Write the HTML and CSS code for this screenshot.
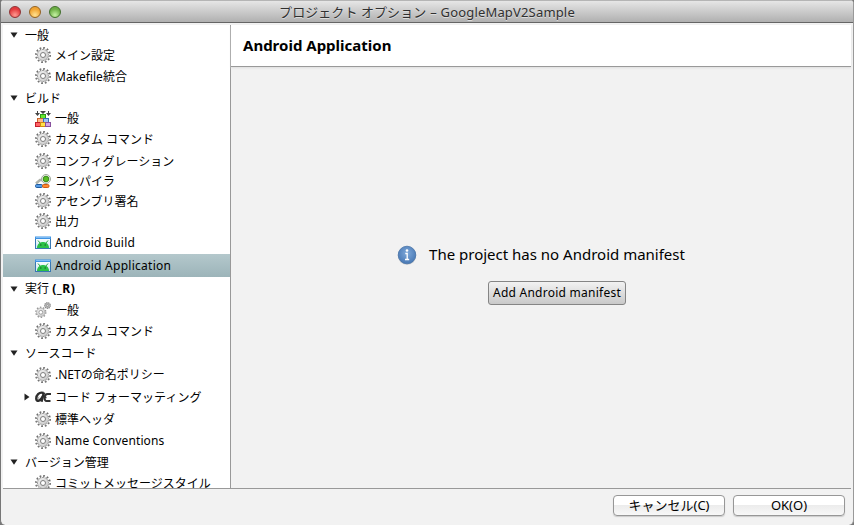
FILE: index.html
```
<!DOCTYPE html>
<html lang="ja">
<head>
<meta charset="utf-8">
<title>プロジェクト オプション – GoogleMapV2Sample</title>
<link rel="stylesheet" href="styles.css">
</head>
<body>
<svg class="defs" aria-hidden="true">
  <defs>
    <linearGradient id="metal" x1="0" y1="0" x2="1" y2="1"><stop offset="0" stop-color="#f5f5f5"/><stop offset="1" stop-color="#c4c4c4"/></linearGradient>
    <linearGradient id="sky" x1="0" y1="0" x2="0" y2="1"><stop offset="0" stop-color="#fff"/><stop offset="1" stop-color="#c9e6f4"/></linearGradient>
    <radialGradient id="info" cx=".5" cy=".4" r=".6"><stop offset="0" stop-color="#7fa9da"/><stop offset="1" stop-color="#4878b4"/></radialGradient>
  </defs>
  <symbol id="gear" viewBox="0 0 16 16">
    <circle cx="8" cy="8" r="6.800" fill="none" stroke="#6c6c6c" stroke-width="2.300" stroke-dasharray="1.700 1.860"/>
    <circle cx="8" cy="8" r="5.600" fill="url(#metal)" stroke="#8c8c8c" stroke-width=".8"/>
    <circle cx="8" cy="8" r="5.900" fill="none" stroke="#dedede" stroke-width="1.500" stroke-dasharray="1 2.089" stroke-dashoffset="-.3"/>
    <circle cx="8" cy="8" r="2.500" fill="#fff" stroke="#7d7d7d" stroke-width="1"/>
  </symbol>
  <symbol id="gears" viewBox="0 0 16 16">
    <circle cx="5.800" cy="10.300" r="4.900" fill="none" stroke="#999" stroke-width="1.600" stroke-dasharray="1.500 1.579"/>
    <circle cx="5.800" cy="10.300" r="4.200" fill="url(#metal)" stroke="#aaa" stroke-width=".8"/>
    <circle cx="5.800" cy="10.300" r="1.900" fill="#fff" stroke="#999" stroke-width=".9"/>
    <circle cx="12.500" cy="3.500" r="2.900" fill="#bbb" stroke="#888" stroke-width="1.100" stroke-dasharray="1.200 .8"/>
    <circle cx="12.500" cy="3.500" r="1.100" fill="#ddd" stroke="#888" stroke-width=".7"/>
  </symbol>
  <symbol id="blocks" viewBox="0 0 16 16">
    <path d="M2.500 0v4M13.500 0v4" stroke="#444"/>
    <path d="M0 2h5L2.500 5zM11 2h5l-2.500 3zM5 0h6L8 3z" fill="#444"/>
    <rect x="5.500" y="3.500" width="5" height="4" fill="#65e82f" stroke="#2b9818"/>
    <rect x="2.500" y="7.500" width="6" height="4" fill="#ffb98a" stroke="#c8662e"/>
    <rect x="8.500" y="7.500" width="5" height="4" fill="#9cc4f8" stroke="#3970b5"/>
    <rect x=".5" y="11.500" width="5" height="4" fill="#ff6464" stroke="#c41e2b"/>
    <rect x="5.500" y="11.500" width="5" height="4" fill="#ffe34b" stroke="#d08a12"/>
    <rect x="10.500" y="11.500" width="5" height="4" fill="#d6a5e4" stroke="#87509d"/>
  </symbol>
  <symbol id="compiler" viewBox="0 0 16 16">
    <path d="M1 10.500l4-3.500h3" fill="none" stroke="#aeb2aa" stroke-width="2.500"/>
    <circle cx="11" cy="6" r="4.500" fill="#e9eee5" stroke="#a0a89c"/>
    <circle cx="11" cy="6" r="2.800" fill="#58bd22" stroke="#368a18"/>
    <rect x=".5" y="11.500" width="7" height="3" rx="1.200" fill="#579ce5" stroke="#205b9e"/>
    <rect x="7.500" y="11.500" width="6.500" height="3" rx="1.200" fill="#ff8a31" stroke="#d05a13"/>
  </symbol>
  <symbol id="android" viewBox="0 0 16 16">
    <rect x=".5" y="2.500" width="15" height="11" fill="url(#sky)" stroke="#3878b3"/>
    <path d="M0 1.500h16V4H0z" fill="#3f93e3"/>
    <path d="M1 2.500h14" stroke="#7fbcf4"/>
    <path d="M2 13c0-8 12-8 12 0z" fill="#2bc148"/>
    <path d="M3 5.500l2.500 3M13 5.500l-2.500 3" stroke="#25a83e"/>
    <path d="M5 10h1.500M9.500 10H11" stroke="#145c22" stroke-width="1.200"/>
  </symbol>
  <symbol id="format" viewBox="0 0 16 16">
    <path d="M8.500 4C4 2.500 1 6.500 1.300 10c.4 3.500 4.500 1.500 6.400-2.500L9 3.500 6.500 12.800" fill="none" stroke="#2e2e2e" stroke-width="2.400"/>
    <path d="M4 7.500l-1 2.500" stroke="#aaa"/>
    <path d="M16 5h-3.500c-3.500 0-4 7-.8 7h3.800" fill="none" stroke="#333" stroke-width="2"/>
    <path d="M10 8.500h1.500" stroke="#333" stroke-width="1.500"/>
  </symbol>
  <symbol id="down" viewBox="0 0 8 6"><path d="M.5.500h7L4 5.800z" fill="#222"/></symbol>
  <symbol id="right" viewBox="0 0 6 8"><path d="M.5.500v7L5.500 4z" fill="#222"/></symbol>
</svg>
<div class="window">
  <header class="titlebar">
    <div class="lights"><i class="light red"></i><i class="light amber"></i><i class="light green"></i></div>
    <h1 class="title"><span class="title-jp">プロジェクト オプション</span><span class="title-name">– GoogleMapV2Sample</span></h1>
  </header>
  <div class="content">
    <nav class="tree">
      <div class="row group h20"><svg class="arrow"><use href="#down"/></svg><span>一般</span></div>
      <div class="row h20"><svg class="icon"><use href="#gear"/></svg><span>メイン設定</span></div>
      <div class="row h22"><svg class="icon"><use href="#gear"/></svg><span>Makefile統合</span></div>
      <div class="row group h22"><svg class="arrow"><use href="#down"/></svg><span>ビルド</span></div>
      <div class="row first h19"><svg class="icon"><use href="#blocks"/></svg><span>一般</span></div>
      <div class="row h22"><svg class="icon"><use href="#gear"/></svg><span>カスタム コマンド</span></div>
      <div class="row h21"><svg class="icon"><use href="#gear"/></svg><span>コンフィグレーション</span></div>
      <div class="row h20"><svg class="icon"><use href="#compiler"/></svg><span>コンパイラ</span></div>
      <div class="row h20"><svg class="icon"><use href="#gear"/></svg><span>アセンブリ署名</span></div>
      <div class="row h20"><svg class="icon"><use href="#gear"/></svg><span>出力</span></div>
      <div class="row latin h23"><svg class="icon"><use href="#android"/></svg><span>Android Build</span></div>
      <div class="row latin selected h23"><svg class="icon"><use href="#android"/></svg><span>Android Application</span></div>
      <div class="row group run h23"><svg class="arrow"><use href="#down"/></svg><span>実行 <b>(_R)</b></span></div>
      <div class="row h20"><svg class="icon"><use href="#gears"/></svg><span>一般</span></div>
      <div class="row h22"><svg class="icon"><use href="#gear"/></svg><span>カスタム コマンド</span></div>
      <div class="row group h22"><svg class="arrow"><use href="#down"/></svg><span>ソースコード</span></div>
      <div class="row net h21"><svg class="icon"><use href="#gear"/></svg><span>.NETの命名ポリシー</span></div>
      <div class="row nested h23"><svg class="arrow-right"><use href="#right"/></svg><svg class="icon"><use href="#format"/></svg><span>コード フォーマッティング</span></div>
      <div class="row h22"><svg class="icon"><use href="#gear"/></svg><span>標準ヘッダ</span></div>
      <div class="row names h21"><svg class="icon"><use href="#gear"/></svg><span>Name Conventions</span></div>
      <div class="row group h22"><svg class="arrow"><use href="#down"/></svg><span>バージョン管理</span></div>
      <div class="row h19"><svg class="icon"><use href="#gear"/></svg><span>コミットメッセージスタイル</span></div>
    </nav>
    <main class="panel">
      <h2 class="heading"><span>Android Application</span></h2>
      <section class="empty">
        <p class="message">
          <svg class="info" viewBox="0 0 20 20"><circle cx="10" cy="10.800" r="9.200" fill="#d0d0d0"/><circle cx="10" cy="10" r="8.800" fill="url(#info)" stroke="#4773a8" stroke-width=".8"/><circle cx="10" cy="5.500" r="1.300" fill="#fff"/><path d="M8.300 8.500h1.900v6M8 14.500h4.200" fill="none" stroke="#fff" stroke-width="1.300"/></svg>
          <span>The project has no Android manifest</span>
        </p>
        <button class="add">Add Android manifest</button>
      </section>
    </main>
  </div>
  <footer class="footer"><button class="push">キャンセル(C)</button><button class="push">OK(O)</button></footer>
</div>
</body>
</html>
```

FILE: styles.css
```
* { box-sizing: border-box; }
body { margin: 0; background: #777; font: 12px/18px "Noto Sans", "Noto Sans CJK JP", sans-serif; color: #000; overflow: hidden; }
button { font: inherit; color: #000; padding: 0; white-space: nowrap; }
.defs { position: absolute; width: 0; height: 0; }
.window { width: 854px; height: 525px; display: flex; flex-direction: column; background: #f2f2f2; border-left: 1px solid #777; border-right: 1px solid #999; border-radius: 4px 4px 5px 5px; overflow: hidden; }
.titlebar { height: 23px; flex: none; display: grid; grid-template-columns: 66px 1fr 66px; align-items: center; background: linear-gradient(#e6e6e6, #b0b0b0); border-top: 1px solid #b5b5b5; border-bottom: 1px solid #656565; }
.lights { display: flex; gap: 8px; padding: 1px 0 0 8px; }
.light { width: 12px; height: 12px; border-radius: 50%; border: 1px solid; }
.red { background: radial-gradient(circle at 50% 80%, #ff9a91, #e2393c 65%); border-color: #8f3234; }
.amber { background: radial-gradient(circle at 50% 80%, #ffe291, #f0a331 65%); border-color: #946222; }
.green { background: radial-gradient(circle at 50% 80%, #c5f2a2, #6cae45 65%); border-color: #416f2c; }
.title { margin: 0; display: flex; justify-content: center; gap: 4px; font-size: 13px; line-height: 18px; font-weight: 400; color: #303030; text-shadow: 0 1px #ddd; white-space: nowrap; }
.title-name { letter-spacing: .17px; }
.title-jp { letter-spacing: .07px; }
.content { height: 465px; flex: none; display: flex; padding: 2px 2px 0; }
.tree { width: 227px; flex: none; background: #fff; overflow: hidden; }
.row { display: flex; align-items: center; padding-left: 32px; gap: 4px; white-space: nowrap; }
.row span { padding-top: 2px; }
.row.latin span { padding-top: 0; letter-spacing: .26px; }
.row.names span { padding-top: 0; letter-spacing: .13px; }
.row.first span, .row.run span, .row.net span { padding-top: 0; }
.run b { letter-spacing: .6px; }
.group { padding-left: 7px; gap: 7px; }
.nested { padding-left: 21px; }
.nested .icon { margin-left: 1px; }
.selected { background: linear-gradient(#b4c8cc, #9cb4b9); }
.h19 { height: 19px; } .h20 { height: 20px; } .h21 { height: 21px; } .h22 { height: 22px; } .h23 { height: 23px; }
.icon { width: 16px; height: 16px; flex: none; }
.arrow { width: 8px; height: 6px; flex: none; }
.arrow-right { width: 6px; height: 8px; flex: none; }
.panel { flex: 1; display: flex; flex-direction: column; border-left: 1px solid #999; }
.heading { height: 42px; flex: none; margin: 0; display: flex; align-items: center; padding: 0 0 2px 12px; background: #fff; border-bottom: 1px solid #999; font-size: 15px; box-shadow: 0 1px 2px #ddd; }
.empty { flex: 1; display: flex; flex-direction: column; align-items: center; padding-top: 177px; }
.message { margin: 0; display: flex; align-items: center; gap: 12px; height: 22px; font-size: 15px; }
.message span { padding-bottom: 2px; }
.info { width: 20px; height: 20px; }
.add { width: 138px; height: 24px; margin-top: 15px; margin-left: 32px; border: 1px solid #858585; border-radius: 3px; background: linear-gradient(#f2f2f2, #c9c9c9); letter-spacing: .25px; }
.footer { flex: 1; display: flex; justify-content: flex-end; align-items: flex-start; gap: 8px; margin: 0 2px; padding: 6px 6px 0 0; border-top: 1px solid #999; }
.push { width: 112px; height: 21px; border: 1px solid #979797; border-radius: 4px; background: linear-gradient(#fff 0 45%, #ececec 50%, #f8f8f8); box-shadow: 0 1px 1px #ccc; font-size: 13px; line-height: 17px; padding-bottom: 1px; }
```
